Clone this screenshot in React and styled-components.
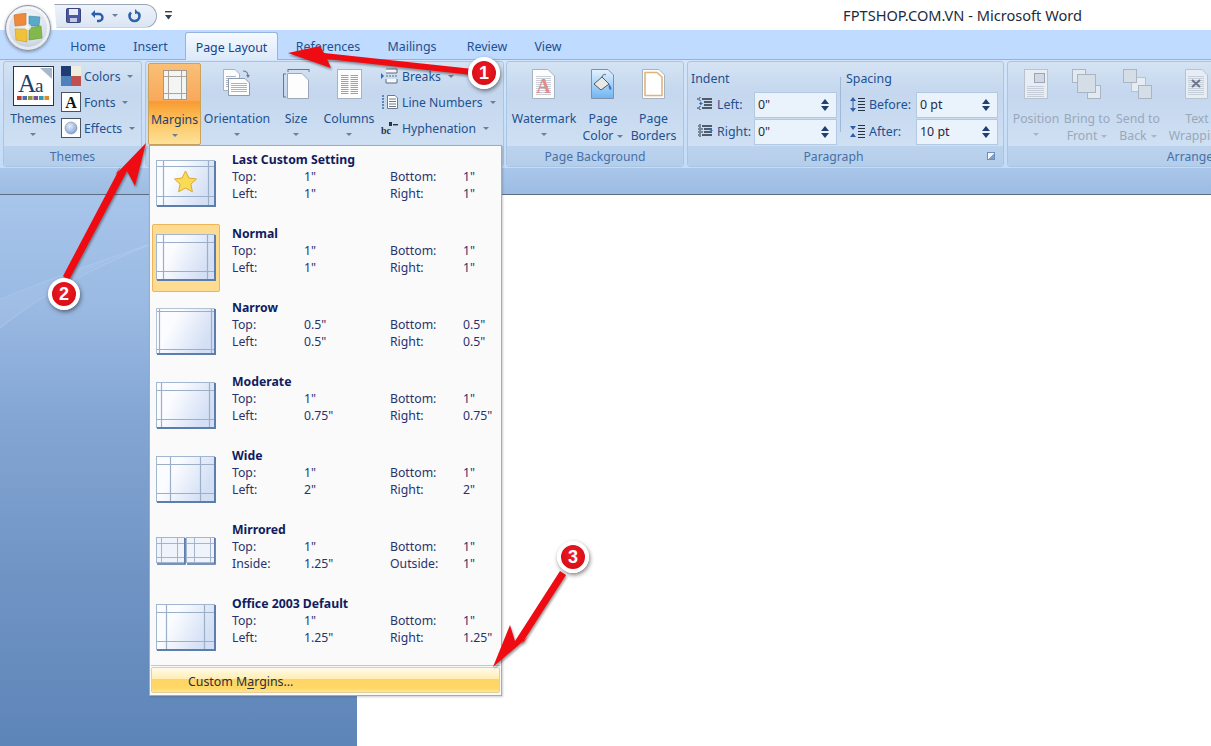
import React from "react";
import styled, { createGlobalStyle } from "styled-components";

const GlobalStyle = createGlobalStyle`
  html, body {
    margin: 0;
    padding: 0;
    background: #fff;
  }
  body {
    font-family: "Noto Sans", "Open Sans", sans-serif;
    -webkit-font-smoothing: antialiased;
  }
`;

const Page = styled.div`
  position: relative;
  width: 1211px;
  height: 746px;
  overflow: hidden;
  display: flex;
  flex-direction: column;
  background: #fff;
`;

/* title bar */
const TitleBar = styled.div`
  height: 30px;
  flex: none;
  display: flex;
  align-items: center;
  background: #fff;
  padding-left: 50px;
`;

const QuickAccess = styled.div`
  width: 107px;
  height: 24px;
  box-sizing: border-box;
  margin-top: 1px;
  display: flex;
  align-items: center;
  padding-left: 16px;
  gap: 10px;
  background: linear-gradient(#eef3fa, #dbe5f3);
  border: 1px solid #9aa5b5;
  border-left: none;
  border-radius: 0 12px 12px 0;
  clip-path: polygon(4% 0, 100% 0, 100% 100%, 6% 100%);
`;

const Customize = styled.div`
  margin-left: 8px;
  display: flex;
`;

const WindowTitle = styled.div`
  margin-left: auto;
  margin-right: 129px;
  font-size: 14.6px;
  color: #1d2a3a;
`;

/* tabs */
const TabStrip = styled.div`
  height: 30px;
  flex: none;
  display: flex;
  align-items: flex-end;
  padding-left: 60px;
  background: #bfdbff;
  border-bottom: 1px solid #8db2e3;
  box-sizing: border-box;
`;

const Tab = styled.div`
  width: ${(p) => p.$w}px;
  height: 28px;
  box-sizing: border-box;
  flex: none;
  display: flex;
  align-items: center;
  justify-content: center;
  font-size: 12.4px;
  padding-top: 3px;
  color: ${(p) => (p.$active ? "#15428b" : "#23508f")};
  ${(p) =>
    p.$active &&
    `
    padding-top: 1px;
    background: linear-gradient(#f5f9ff, #dbe9f9);
    border: 1px solid #93b4dc;
    border-bottom: none;
    border-radius: 3px 3px 0 0;
    position: relative;
    top: 1px;
  `}
`;

/* ribbon */
const Ribbon = styled.div`
  height: 108px;
  flex: none;
  display: flex;
  box-sizing: border-box;
  padding: 1px 0 0 3px;
  background: linear-gradient(#d3e5fa, #c4dcf7);
`;

const Group = styled.div`
  width: ${(p) => p.$w}px;
  margin-right: ${(p) => p.$gap ?? 3}px;
  height: 106px;
  box-sizing: border-box;
  flex: none;
  display: flex;
  flex-direction: column;
  border: 1px solid #a9c5e4;
  border-radius: 3px;
  overflow: hidden;
  background: linear-gradient(#d5e3f3 0, #c4d7ee 30%, #d3e3f5 100%);
`;

const GroupBody = styled.div`
  height: 84px;
  flex: none;
  display: flex;
  padding: 0 0 0 ${(p) => p.$pad ?? 1}px;
`;

const GroupLabel = styled.div`
  position: relative;
  flex: 1;
  display: flex;
  align-items: center;
  justify-content: center;
  font-size: 12.2px;
  color: #4570a8;
  padding-right: ${(p) => p.$shift ?? 0}px;
  background: linear-gradient(#bcd3ee, #b4cdea);
`;

const Launcher = styled.div`
  position: absolute;
  right: 8px;
  bottom: 6px;
  width: 8px;
  height: 8px;
  box-sizing: border-box;
  border: 1px solid #6c8fbd;
  background: linear-gradient(135deg, #f2f6fb 50%, #7f9fc8 50%);
`;

const BigButton = styled.div`
  width: ${(p) => p.$w}px;
  flex: none;
  display: flex;
  flex-direction: column;
  align-items: center;
  box-sizing: border-box;
  padding-top: ${(p) => p.$top ?? 7}px;
  font-size: 12.3px;
  line-height: 17px;
  color: ${(p) => (p.$off ? "#9aa8ba" : "#23508f")};
  ${(p) =>
    p.$hot &&
    `
    margin: 1px 0 0;
    height: 82px;
    color: #1d3f73;
    border: 1px solid #c9a25e;
    border-radius: 2px;
    background: linear-gradient(#f9c078 0, #f9a85a 46%, #f99a30 47%, #fcc25c 70%, #fde29a 100%);
    padding-top: 6px;
  `}
`;

const IconSlot = styled.div`
  height: ${(p) => p.$h ?? 40}px;
  flex: none;
  display: flex;
  align-items: flex-start;
  justify-content: center;
`;

const BigLabel = styled.div`
  text-align: center;
  white-space: nowrap;
  margin-top: 1px;
`;

const Caret = styled.span`
  display: inline-block;
  width: 0;
  height: 0;
  vertical-align: middle;
  margin-left: ${(p) => p.$gap ?? 4}px;
  border-left: 3px solid transparent;
  border-right: 3px solid transparent;
  border-top: 3px solid ${(p) => (p.$off ? "#a9b5c4" : "#6a7f9c")};
`;

const LowCaret = styled(Caret)`
  display: block;
  margin: 6px auto 0;
`;

const SmallList = styled.div`
  display: flex;
  flex-direction: column;
  padding-top: 1px;
  margin-left: ${(p) => p.$left ?? 0}px;
`;

const SmallRow = styled.div`
  height: 26px;
  display: flex;
  align-items: center;
  gap: 3px;
  font-size: 12.2px;
  color: #23508f;
  white-space: nowrap;
`;

const FieldColumn = styled.div`
  width: ${(p) => p.$w}px;
  flex: none;
  display: flex;
  flex-direction: column;
  padding-top: 7px;
  box-sizing: border-box;
`;

const ColumnRule = styled.div`
  width: 1px;
  height: 55px;
  flex: none;
  margin-top: 15px;
  background: #9fb9d8;
`;

const ColumnTitle = styled.div`
  font-size: 12.4px;
  line-height: 20px;
  color: #23508f;
  height: 22px;
  padding-left: ${(p) => p.$pad}px;
`;

const FieldRow = styled.div`
  height: 27px;
  display: flex;
  align-items: center;
  font-size: 12.4px;
  color: #23508f;
`;

const FieldIcon = styled.div`
  width: ${(p) => p.$w}px;
  flex: none;
  display: flex;
  padding-left: ${(p) => p.$pad}px;
  box-sizing: border-box;
`;

const FieldName = styled.div`
  width: ${(p) => p.$w}px;
  flex: none;
`;

const Spinner = styled.div`
  width: ${(p) => p.$w}px;
  height: 26px;
  flex: none;
  display: flex;
  align-items: center;
  justify-content: space-between;
  box-sizing: border-box;
  padding: 0 7px 0 3px;
  border: 1px solid #b3c8e2;
  background: #eaf2fb;
  color: #1f2b3d;
  font-size: 12.4px;
`;

const SpinArrows = styled.div`
  display: flex;
  flex-direction: column;
  gap: 2px;
`;

const SpinUp = styled.span`
  width: 0;
  height: 0;
  border-left: 4px solid transparent;
  border-right: 4px solid transparent;
  border-bottom: 5px solid #1f3f70;
`;

const SpinDown = styled.span`
  width: 0;
  height: 0;
  border-left: 4px solid transparent;
  border-right: 4px solid transparent;
  border-top: 5px solid #1f3f70;
`;

/* area under the ribbon */
const RulerStrip = styled.div`
  height: 27px;
  flex: none;
  background: linear-gradient(#a9c6ea, #9dbce3);
  border-bottom: 1px solid #5e6d82;
  box-sizing: border-box;
`;

const Workspace = styled.div`
  flex: 1;
  display: flex;
  min-height: 0;
`;

const SidePane = styled.div`
  position: relative;
  width: 357px;
  flex: none;
  background: linear-gradient(#a8c5eb 0, #9abae3 20%, #84a6d4 40%, #6f94c4 70%, #5e85b8 100%);
`;

const Swoosh = styled.svg`
  position: absolute;
  left: 0;
  top: 0;
`;

const Doc = styled.div`
  flex: 1;
  background: #fff;
`;

/* office orb */
const Orb = styled.div`
  position: absolute;
  left: 5px;
  top: 5px;
  width: 46px;
  height: 46px;
  box-sizing: border-box;
  border-radius: 50%;
  border: 1px solid #8b95a3;
  box-shadow: 0 1px 3px rgba(50, 70, 100, 0.5), inset 0 0 0 3px rgba(255, 255, 255, 0.6);
  background: radial-gradient(circle at 50% 30%, #f6f8fb 0, #d5dde8 60%, #a4b2c5 100%);
  display: flex;
  align-items: center;
  justify-content: center;
`;

/* margins drop-down */
const Menu = styled.div`
  position: absolute;
  left: 149px;
  top: 145px;
  width: 353px;
  height: 551px;
  box-sizing: border-box;
  display: flex;
  flex-direction: column;
  padding: 4px 1px 1px;
  border: 1px solid #a7abb0;
  background: #fafafa;
  box-shadow: 1px 1px 2px rgba(60, 60, 60, 0.25);
`;

const MenuItem = styled.div`
  height: 74px;
  flex: none;
  display: flex;
  &:nth-child(7) {
    height: 71px;
  }
`;

const ThumbCell = styled.div`
  width: 68px;
  height: 68px;
  flex: none;
  margin-left: 1px;
  padding-top: 10px;
  padding-left: 4px;
  box-sizing: border-box;
  ${(p) =>
    p.$selected &&
    `
    background: #fddc92;
    outline: 1px solid #f0b45c;
    outline-offset: -1px;
    border-radius: 2px;
  `}
`;

const ItemText = styled.div`
  margin-left: 12px;
  padding-top: 1px;
  flex: 1;
  display: grid;
  grid-template-columns: 72px 86px 73px auto;
  grid-auto-rows: 17px;
  align-content: start;
  font-size: 12.25px;
  line-height: 17px;
  color: #28336e;
`;

const ItemTitle = styled.div`
  grid-column: 1 / -1;
  font-weight: 700;
  color: #111c5e;
`;

const FooterRule = styled.div`
  height: 1px;
  flex: none;
  background: #c9c6ba;
  margin: 0 0 1px;
`;

const CustomMargins = styled.div`
  height: 26px;
  flex: none;
  display: flex;
  align-items: center;
  padding: 2px 0 0 36px;
  box-sizing: border-box;
  font-size: 12.35px;
  color: #27303f;
  white-space: pre;
  border: 1px solid #e2cf9b;
  border-radius: 2px;
  background: linear-gradient(#fffbea 0, #ffeeb4 44%, #ffd466 46%, #ffd868 85%, #ffe79a 100%);
  u {
    text-underline-offset: 2px;
  }
`;

/* red tutorial annotations */
const ArrowLayer = styled.svg`
  position: absolute;
  left: 0;
  top: 0;
  pointer-events: none;
  filter: drop-shadow(1px 2px 1px rgba(40, 30, 30, 0.45));
`;

const Badge = styled.div`
  position: absolute;
  left: ${(p) => p.$x - 16}px;
  top: ${(p) => p.$y - 16}px;
  width: 32px;
  height: 32px;
  box-sizing: border-box;
  border-radius: 50%;
  border: 4px solid #fff;
  display: flex;
  align-items: center;
  justify-content: center;
  font-family: "Liberation Sans", sans-serif;
  font-size: 18px;
  font-weight: 700;
  color: #fff;
  background: radial-gradient(circle at 50% 40%, #ee1c25 0, #d90f17 70%, #b80c12 100%);
  box-shadow: 1px 2px 4px rgba(30, 30, 30, 0.55);
`;

function PageSheet({ x = 0, y = 0, w = 24, h = 30, fill = "#fdfdfd", stroke = "#a7b3c2", fold = 6 }) {
  const d = `M${x + 0.5} ${y + 0.5}H${x + w - fold}L${x + w - 0.5} ${y + fold}V${y + h - 0.5}H${x + 0.5}Z`;
  return <path d={d} fill={fill} stroke={stroke} />;
}

function TextLines({ x, y, w, n, step = 2, color = "#a9b4c2" }) {
  return (
    <>
      {Array.from({ length: n }).map((_, i) => (
        <rect key={i} x={x} y={y + i * step} width={w} height="1" fill={color} />
      ))}
    </>
  );
}

function ThemesIcon() {
  const bars = ["#c0392b", "#4f6fb0", "#8a9a3c", "#7a4f9c", "#2e9db0", "#e08a2c"];
  return (
    <svg width="41" height="40" viewBox="0 0 41 40">
      <rect x="0.5" y="0.5" width="40" height="39" fill="#fff" stroke="#2c3442" />
      <path d="M27 2H39V13Z" fill="#a8b8cc" />
      <text x="5" y="26" fontFamily="Liberation Serif, serif" fontSize="25" fill="#1b3f73">A</text>
      <text x="22" y="26" fontFamily="Liberation Serif, serif" fontSize="19" fill="#1b3f73">a</text>
      {bars.map((c, i) => (
        <rect key={c} x={4 + i * 5.5} y="30" width="4.6" height="4" fill={c} />
      ))}
    </svg>
  );
}

function ColorsIcon() {
  return (
    <svg width="20" height="20" viewBox="0 0 20 20">
      <rect width="10" height="10" fill="#1f3d73" />
      <rect x="10" width="10" height="10" fill="#efece0" />
      <rect y="10" width="10" height="10" fill="#4f81bd" />
      <rect x="10" y="10" width="10" height="10" fill="#c0504d" />
    </svg>
  );
}

function FontsIcon() {
  return (
    <svg width="20" height="20" viewBox="0 0 20 20">
      <rect x="0.5" y="0.5" width="19" height="19" fill="#fff" stroke="#4a5360" />
      <text x="10" y="16" textAnchor="middle" fontFamily="Liberation Serif, serif" fontWeight="700" fontSize="16" fill="#111">A</text>
    </svg>
  );
}

function EffectsIcon() {
  return (
    <svg width="20" height="20" viewBox="0 0 20 20">
      <defs>
        <radialGradient id="fx" cx="0.4" cy="0.35" r="0.7">
          <stop offset="0" stopColor="#e6eefb" />
          <stop offset="1" stopColor="#7c9ed6" />
        </radialGradient>
      </defs>
      <rect x="0.5" y="0.5" width="19" height="19" fill="#fff" stroke="#4a5360" />
      <circle cx="10" cy="10" r="6" fill="url(#fx)" stroke="#7f8fa8" strokeWidth="0.6" />
    </svg>
  );
}

function MarginsIcon() {
  return (
    <svg width="24" height="30" viewBox="0 0 24 30">
      <rect x="0.5" y="0.5" width="23" height="29" fill="#f3f4f4" stroke="#a19a8d" />
      <path d="M5.5 1V29M18.5 1V29M1 6.5H23M1 23.5H23" stroke="#a9a59d" fill="none" />
    </svg>
  );
}

function OrientationIcon() {
  return (
    <svg width="30" height="30" viewBox="0 0 30 30">
      <PageSheet x={1} y={0} w={17} h={22} fold={5} />
      <TextLines x={4} y={7} w={10} n={6} />
      <PageSheet x={6} y={9} w={22} h={18} fold={5} stroke="#8d9aab" />
      <TextLines x={9} y={14} w={16} n={5} />
      <path d="M21 2c3 0 5 2 5 5" fill="none" stroke="#6a7d97" strokeWidth="1.2" />
      <path d="M24 6l2 3 2-3z" fill="#6a7d97" />
    </svg>
  );
}

function SizeIcon() {
  return (
    <svg width="27" height="30" viewBox="0 0 27 30">
      <path d="M5 0.5H26M0.5 5V28" stroke="#6a7788" fill="none" />
      <path d="M5 0V3M26 0V3M0 5H3M0 28H3" stroke="#6a7788" fill="none" />
      <PageSheet x={4} y={4} w={22} h={26} fold={7} stroke="#9aa7b8" />
    </svg>
  );
}

function ColumnsIcon() {
  return (
    <svg width="25" height="30" viewBox="0 0 25 30">
      <rect x="0.5" y="0.5" width="24" height="29" fill="#fdfdfd" stroke="#a7b3c2" />
      <TextLines x={4} y={6} w={7.5} n={10} color="#98a3b2" />
      <TextLines x={13.5} y={6} w={7.5} n={10} color="#98a3b2" />
    </svg>
  );
}

function BreaksIcon() {
  return (
    <svg width="18" height="16" viewBox="0 0 18 16">
      <path d="M5 1H16V5H5M5 11V15H16V11" fill="#f6f8fb" stroke="#5c6a7e" />
      <path d="M5 8H16" stroke="#5c6a7e" strokeDasharray="2 1" />
      <path d="M0 5l3 3-3 3z" fill="#2f69b6" />
    </svg>
  );
}

function LineNumbersIcon() {
  return (
    <svg width="18" height="16" viewBox="0 0 18 16">
      <path d="M1 2h3M1 5h3M1 8h3M1 11h3M1 14h3" stroke="#3e6aa8" strokeWidth="1.5" strokeDasharray="2 1" />
      <path d="M6.5 1.5H14L16.5 4V14.5H6.5Z" fill="#fff" stroke="#6f7b8d" />
      <path d="M8 5h7M8 7.5h7M8 10h7M8 12.5h7" stroke="#6f7b8d" />
    </svg>
  );
}

function HyphenationIcon() {
  return (
    <svg width="18" height="16" viewBox="0 0 18 16">
      <text x="0" y="14" fontFamily="Liberation Serif, serif" fontWeight="700" fontSize="10" fill="#2c3442">bc</text>
      <rect x="12" y="4" width="5" height="1.4" fill="#2c3442" />
      <rect x="8" y="2" width="3" height="4" fill="#2c3442" />
    </svg>
  );
}

function WatermarkIcon() {
  return (
    <svg width="24" height="30" viewBox="0 0 24 30">
      <PageSheet w={23} h={30} fold={7} />
      <TextLines x={4} y={7} w={15} n={10} step={2} color="#c9ced6" />
      <text x="11.5" y="24" textAnchor="middle" fontFamily="Liberation Serif, serif" fontWeight="700" fontSize="20" fill="#e38b8b">A</text>
    </svg>
  );
}

function PageColorIcon() {
  return (
    <svg width="24" height="30" viewBox="0 0 24 30">
      <defs>
        <linearGradient id="pc" x1="0" y1="0" x2="0" y2="1">
          <stop offset="0" stopColor="#e4f1ff" />
          <stop offset="1" stopColor="#6fb4f2" />
        </linearGradient>
      </defs>
      <PageSheet w={23} h={30} fold={6} fill="url(#pc)" stroke="#7c92ab" />
      <path d="M3 15l8-7 7 7-8 6z" fill="#e8e8e6" stroke="#55595f" />
      <path d="M11 8c1-3 3-3 4-2" fill="none" stroke="#55595f" />
      <path d="M18 15c2 2 3 4 2 6-2 0-3-3-2-6z" fill="#3d77c4" />
    </svg>
  );
}

function PageBordersIcon() {
  return (
    <svg width="24" height="30" viewBox="0 0 24 30">
      <PageSheet w={23} h={30} fold={6} stroke="#a7b3c2" />
      <path d="M3 3.5H15L20 8V26.5H3Z" fill="#fff" stroke="#e0b47c" strokeWidth="1.6" />
    </svg>
  );
}

function IndentIcon({ out }) {
  return (
    <svg width="16" height="15" viewBox="0 0 16 15">
      <path d="M5 2H15M7 5H15M7 8H15M5 11H15" stroke="#27323f" strokeWidth="1.4" />
      <path d={out ? "M1 2h3M1 5h5M1 8h5M1 11h3" : "M0 2h3M0 11h3"} stroke="#27323f" strokeWidth="1" />
      <path d={out ? "M16 6.5l-3-2v4z" : "M0 6.5h3l0-2 3 2-3 2v-2"} fill="#3e78c8" />
      <path d="M3 0V15" stroke="#27323f" strokeDasharray="1 2" />
    </svg>
  );
}

function SpacingIcon({ after }) {
  const arrows = after ? "M3 6L0 2H6ZM3 9L0 13H6Z" : "M3 0L0 4H6ZM3 15L0 11H6Z";
  return (
    <svg width="16" height="15" viewBox="0 0 16 15">
      <path d="M8 1.5H15M8 4.5H15M8 7.5H15M8 10.5H15M8 13.5H15" stroke="#27323f" strokeWidth="1" />
      <path d={arrows} fill="#2f5ea8" />
      {!after && <path d="M3 4V11" stroke="#2f5ea8" />}
    </svg>
  );
}

function PositionIcon() {
  return (
    <svg width="24" height="30" viewBox="0 0 24 30">
      <rect x="0.5" y="0.5" width="23" height="29" fill="#e8edf3" stroke="#b8c3d0" />
      <TextLines x={3} y={17} w={17} n={6} color="#c5ced9" />
      <rect x="10.5" y="4.5" width="10" height="9" fill="#cfd8e3" stroke="#9aa6b6" />
    </svg>
  );
}

function BringFrontIcon() {
  return (
    <svg width="30" height="30" viewBox="0 0 30 30">
      <rect x="0.5" y="0.5" width="13" height="13" fill="#e3e9f1" stroke="#aab5c3" />
      <rect x="15.5" y="16.5" width="13" height="13" fill="#e3e9f1" stroke="#aab5c3" />
      <rect x="5.5" y="5.5" width="18" height="18" fill="#d5dde7" stroke="#aab5c3" />
    </svg>
  );
}

function SendBackIcon() {
  return (
    <svg width="30" height="30" viewBox="0 0 30 30">
      <rect x="8.5" y="8.5" width="14" height="14" fill="#e7ecf3" stroke="#b7c2cf" />
      <rect x="0.5" y="0.5" width="13" height="13" fill="#d5dde7" stroke="#aab5c3" />
      <rect x="15.5" y="16.5" width="13" height="13" fill="#d5dde7" stroke="#aab5c3" />
    </svg>
  );
}

function WrapIcon() {
  return (
    <svg width="24" height="30" viewBox="0 0 24 30">
      <PageSheet w={23} h={30} fold={6} fill="#e8edf3" stroke="#b8c3d0" />
      <TextLines x={3} y={7} w={16} n={10} color="#c5ced9" />
      <path d="M7 11l8 7M15 11l-8 7" stroke="#6b7788" strokeWidth="2" />
    </svg>
  );
}

function SaveIcon() {
  return (
    <svg width="15" height="15" viewBox="0 0 15 15">
      <rect x="0.5" y="0.5" width="14" height="14" rx="1" fill="#4b58a8" stroke="#3a4377" />
      <rect x="3" y="1" width="9" height="6" fill="#e7ebf7" />
      <rect x="4" y="10" width="7" height="4" fill="#c3c9de" />
    </svg>
  );
}

function UndoIcon() {
  return (
    <svg width="13" height="14" viewBox="0 0 13 14">
      <path d="M3 5h5a3 3 0 0 1 0 7H6" fill="none" stroke="#2d5ea8" strokeWidth="2.4" />
      <path d="M0 5l4-4v8z" fill="#2d5ea8" />
    </svg>
  );
}

function RedoIcon() {
  return (
    <svg width="14" height="14" viewBox="0 0 14 14">
      <path d="M3 3.5a5 5 0 1 0 7 0" fill="none" stroke="#2d63ad" strokeWidth="2.6" />
      <path d="M7 0l4 4-4 1z" fill="#2d63ad" />
    </svg>
  );
}

function CustomizeIcon() {
  return (
    <svg width="7" height="9" viewBox="0 0 7 9">
      <rect y="0" width="7" height="1.4" fill="#33415a" />
      <path d="M0 4H7L3.5 8.5Z" fill="#33415a" />
    </svg>
  );
}

function OfficeLogo() {
  return (
    <svg width="30" height="30" viewBox="0 0 30 30">
      <path d="M1 2 13 0V12L2 13Z" fill="#ee8a3c" stroke="#c96a22" strokeWidth="0.6" />
      <path d="M16 3 27 4 26 13 16 13Z" fill="#5aa9c9" stroke="#3a86a8" strokeWidth="0.6" />
      <path d="M2 16 14 16V29L3 27Z" fill="#f0c23c" stroke="#c99a1e" strokeWidth="0.6" />
      <path d="M16 15 28 13 29 25 16 27Z" fill="#83b84c" stroke="#5f9330" strokeWidth="0.6" />
      <circle cx="15" cy="14" r="3" fill="#f4f8fb" opacity="0.75" />
    </svg>
  );
}

function MarginThumb({ l, r, t, b, star, fade }) {
  return (
    <svg width="60" height="47" viewBox="0 0 60 47">
      <defs>
        <linearGradient id={`th${l}${t}${b}`} x1="0" y1="0" x2="1" y2="0.4">
          <stop offset="0.35" stopColor="#fbfcff" />
          <stop offset="1" stopColor="#d3dff5" />
        </linearGradient>
      </defs>
      <rect x="0.5" y="0.5" width="58" height="45" fill={`url(#th${l}${t}${b})`} stroke={fade ? "#b3c2d6" : "#a3b6cf"} />
      <path d="M59 1V46H1" fill="none" stroke="#5c7ead" strokeWidth="2" />
      <path
        d={`M${l + 0.5} 1V45M${58.5 - r} 1V45M1 ${t + 0.5}H58M1 ${45.5 - b}H58`}
        stroke="#9bafc8"
        strokeWidth="1.2"
        fill="none"
      />
      {star && (
        <path
          d="M29.5 11l3.4 7 7.6 1-5.6 5.2 1.5 7.6-6.9-3.8-6.9 3.8 1.5-7.6-5.6-5.2 7.6-1z"
          fill="#fadb56"
          stroke="#d9aa2e"
        />
      )}
    </svg>
  );
}

function MirroredThumb() {
  const pane = (x, lx, rx) => (
    <g key={x}>
      <rect x={x + 0.5} y="0.5" width="28" height="25" fill="#eef3fc" stroke="#a3b6cf" />
      <path d={`M${x + 29} 1V27H${x + 1}`} fill="none" stroke="#4f71a3" strokeWidth="1.6" />
      <path d={`M${lx} 1V26M${rx} 1V26M${x + 1} 6.5H${x + 28}M${x + 1} 20.5H${x + 28}`} stroke="#a3b4cb" fill="none" />
    </g>
  );
  return (
    <svg width="60" height="47" viewBox="0 0 60 47">
      <g transform="translate(0 7)">
        {pane(0, 5.5, 21.5)}
        {pane(30, 38.5, 54.5)}
      </g>
    </svg>
  );
}

const PRESETS = [
  { title: "Last Custom Setting", thumb: { l: 7, r: 6, t: 6, b: 9, star: true }, rows: [["Top:", '1"', "Bottom:", '1"'], ["Left:", '1"', "Right:", '1"']] },
  { title: "Normal", selected: true, thumb: { l: 7, r: 7, t: 8, b: 8 }, rows: [["Top:", '1"', "Bottom:", '1"'], ["Left:", '1"', "Right:", '1"']] },
  { title: "Narrow", thumb: { l: 3, r: 3, t: 3, b: 4, fade: true }, rows: [["Top:", '0.5"', "Bottom:", '0.5"'], ["Left:", '0.5"', "Right:", '0.5"']] },
  { title: "Moderate", thumb: { l: 5, r: 5, t: 8, b: 8 }, rows: [["Top:", '1"', "Bottom:", '1"'], ["Left:", '0.75"', "Right:", '0.75"']] },
  { title: "Wide", thumb: { l: 14, r: 14, t: 8, b: 8 }, rows: [["Top:", '1"', "Bottom:", '1"'], ["Left:", '2"', "Right:", '2"']] },
  { title: "Mirrored", mirrored: true, rows: [["Top:", '1"', "Bottom:", '1"'], ["Inside:", '1.25"', "Outside:", '1"']] },
  { title: "Office 2003 Default", thumb: { l: 10, r: 10, t: 8, b: 8 }, rows: [["Top:", '1"', "Bottom:", '1"'], ["Left:", '1.25"', "Right:", '1.25"']] },
];

function Arrow({ points }) {
  return <polygon points={points} fill="#ee0c12" />;
}

function Stepper() {
  return (
    <SpinArrows>
      <SpinUp />
      <SpinDown />
    </SpinArrows>
  );
}

export default function App() {
  return (
    <Page>
      <GlobalStyle />
      <TitleBar>
        <QuickAccess>
          <SaveIcon />
          <UndoIcon />
          <Caret $gap={-2} />
          <RedoIcon />
        </QuickAccess>
        <Customize>
          <CustomizeIcon />
        </Customize>
        <WindowTitle>FPTSHOP.COM.VN - Microsoft Word</WindowTitle>
      </TitleBar>

      <TabStrip>
        <Tab $w={56}>Home</Tab>
        <Tab $w={69}>Insert</Tab>
        <Tab $w={93} $active>Page Layout</Tab>
        <Tab $w={100}>References</Tab>
        <Tab $w={68}>Mailings</Tab>
        <Tab $w={82}>Review</Tab>
        <Tab $w={40}>View</Tab>
      </TabStrip>

      <Ribbon>
        <Group $w={139}>
          <GroupBody>
            <BigButton $w={56} $top={4}>
              <IconSlot $h={43}><ThemesIcon /></IconSlot>
              <BigLabel>Themes</BigLabel>
              <LowCaret />
            </BigButton>
            <SmallList>
              <SmallRow><ColorsIcon />Colors<Caret /></SmallRow>
              <SmallRow><FontsIcon />Fonts<Caret /></SmallRow>
              <SmallRow><EffectsIcon />Effects<Caret /></SmallRow>
            </SmallList>
          </GroupBody>
          <GroupLabel>Themes</GroupLabel>
        </Group>

        <Group $w={359} $gap={2}>
          <GroupBody $pad={2}>
            <BigButton $w={53} $hot>
              <IconSlot><MarginsIcon /></IconSlot>
              <BigLabel>Margins</BigLabel>
              <LowCaret />
            </BigButton>
            <BigButton $w={72}>
              <IconSlot><OrientationIcon /></IconSlot>
              <BigLabel>Orientation</BigLabel>
              <LowCaret />
            </BigButton>
            <BigButton $w={46}>
              <IconSlot><SizeIcon /></IconSlot>
              <BigLabel>Size</BigLabel>
              <LowCaret />
            </BigButton>
            <BigButton $w={60}>
              <IconSlot><ColumnsIcon /></IconSlot>
              <BigLabel>Columns</BigLabel>
              <LowCaret />
            </BigButton>
            <SmallList $left={2}>
              <SmallRow><BreaksIcon />Breaks<Caret /></SmallRow>
              <SmallRow><LineNumbersIcon />Line Numbers<Caret /></SmallRow>
              <SmallRow><HyphenationIcon />Hyphenation<Caret /></SmallRow>
            </SmallList>
          </GroupBody>
          <GroupLabel />
        </Group>

        <Group $w={178}>
          <GroupBody>
            <BigButton $w={72}>
              <IconSlot><WatermarkIcon /></IconSlot>
              <BigLabel>Watermark</BigLabel>
              <LowCaret />
            </BigButton>
            <BigButton $w={46}>
              <IconSlot><PageColorIcon /></IconSlot>
              <BigLabel>Page<br />Color<Caret /></BigLabel>
            </BigButton>
            <BigButton $w={55}>
              <IconSlot><PageBordersIcon /></IconSlot>
              <BigLabel>Page<br />Borders</BigLabel>
            </BigButton>
          </GroupBody>
          <GroupLabel>Page Background</GroupLabel>
        </Group>

        <Group $w={317}>
          <GroupBody $pad={1}>
            <FieldColumn $w={151}>
              <ColumnTitle $pad={2}>Indent</ColumnTitle>
              <FieldRow>
                <FieldIcon $w={28} $pad={8}><IndentIcon /></FieldIcon>
                <FieldName $w={37}>Left:</FieldName>
                <Spinner $w={83}>0"<Stepper /></Spinner>
              </FieldRow>
              <FieldRow>
                <FieldIcon $w={28} $pad={8}><IndentIcon out /></FieldIcon>
                <FieldName $w={37}>Right:</FieldName>
                <Spinner $w={83}>0"<Stepper /></Spinner>
              </FieldRow>
            </FieldColumn>
            <ColumnRule />
            <FieldColumn $w={160}>
              <ColumnTitle $pad={5}>Spacing</ColumnTitle>
              <FieldRow>
                <FieldIcon $w={28} $pad={9}><SpacingIcon /></FieldIcon>
                <FieldName $w={47}>Before:</FieldName>
                <Spinner $w={82}>0 pt<Stepper /></Spinner>
              </FieldRow>
              <FieldRow>
                <FieldIcon $w={28} $pad={9}><SpacingIcon after /></FieldIcon>
                <FieldName $w={47}>After:</FieldName>
                <Spinner $w={82}>10 pt<Stepper /></Spinner>
              </FieldRow>
            </FieldColumn>
          </GroupBody>
          <GroupLabel $shift={24}>Paragraph<Launcher /></GroupLabel>
        </Group>

        <Group $w={366} $gap={0}>
          <GroupBody $pad={3}>
            <BigButton $w={50} $off>
              <IconSlot><PositionIcon /></IconSlot>
              <BigLabel>Position</BigLabel>
              <LowCaret $off />
            </BigButton>
            <BigButton $w={52} $off>
              <IconSlot><BringFrontIcon /></IconSlot>
              <BigLabel>Bring to<br />Front<Caret $off /></BigLabel>
            </BigButton>
            <BigButton $w={50} $off>
              <IconSlot><SendBackIcon /></IconSlot>
              <BigLabel>Send to<br />Back<Caret $off /></BigLabel>
            </BigButton>
            <BigButton $w={68} $off>
              <IconSlot><WrapIcon /></IconSlot>
              <BigLabel>Text<br />Wrapping</BigLabel>
            </BigButton>
          </GroupBody>
          <GroupLabel>Arrange</GroupLabel>
        </Group>
      </Ribbon>

      <RulerStrip />

      <Workspace>
        <SidePane>
          <Swoosh width="357" height="552" viewBox="0 0 357 552">
            <path d="M0 104C50 84 100 66 148 50C100 66 45 95 0 133Z" fill="#c6dbf5" opacity="0.13" />
            <path d="M0 133C40 100 95 72 148 50" fill="none" stroke="#c6dbf5" strokeWidth="1.5" opacity="0.25" />
            <path d="M0 104C50 84 100 66 148 50" fill="none" stroke="#c6dbf5" opacity="0.25" />
          </Swoosh>
        </SidePane>
        <Doc />
      </Workspace>

      <Orb><OfficeLogo /></Orb>

      <Menu>
        {PRESETS.map((item) => (
          <MenuItem key={item.title}>
            <ThumbCell $selected={item.selected}>
              {item.mirrored ? <MirroredThumb /> : <MarginThumb {...item.thumb} />}
            </ThumbCell>
            <ItemText>
              <ItemTitle>{item.title}</ItemTitle>
              {item.rows.flat().map((cell, i) => (
                <div key={i}>{cell}</div>
              ))}
            </ItemText>
          </MenuItem>
        ))}
        <FooterRule />
        <CustomMargins>Custom M<u>a</u>rgins...</CustomMargins>
      </Menu>

      <ArrowLayer width="1211" height="746" viewBox="0 0 1211 746">
        <Arrow points="288,53 331,68 327,59 472,75 473,69 324,53 320,46" />
        <Arrow points="146,143 135,186 127,171 69,280 63,276 121,166 115,175" />
        <Arrow points="493,667 510,625 515,641 560,571 566,575 521,645 528,637" />
      </ArrowLayer>
      <Badge $x={484} $y={73}>1</Badge>
      <Badge $x={64} $y={294}>2</Badge>
      <Badge $x={573} $y={557}>3</Badge>
    </Page>
  );
}
